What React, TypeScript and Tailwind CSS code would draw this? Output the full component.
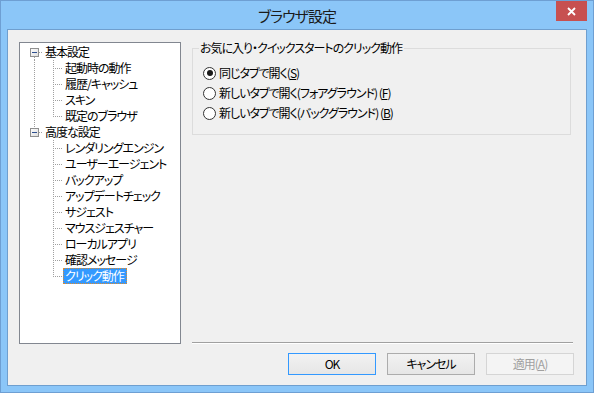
import React from "react";

type Row = {
  label: string;
  kind: "parent" | "child";
  firstParent?: boolean;
  lastParent?: boolean;
  lastChild?: boolean;
  underLast?: boolean;
  selected?: boolean;
};

const rows: Row[] = [
  { label: "基本設定", kind: "parent", firstParent: true },
  { label: "起動時の動作", kind: "child" },
  { label: "履歴/キャッシュ", kind: "child" },
  { label: "スキン", kind: "child" },
  { label: "既定のブラウザ", kind: "child", lastChild: true },
  { label: "高度な設定", kind: "parent", lastParent: true },
  { label: "レンダリングエンジン", kind: "child", underLast: true },
  { label: "ユーザーエージェント", kind: "child", underLast: true },
  { label: "バックアップ", kind: "child", underLast: true },
  { label: "アップデートチェック", kind: "child", underLast: true },
  { label: "サジェスト", kind: "child", underLast: true },
  { label: "マウスジェスチャー", kind: "child", underLast: true },
  { label: "ローカルアプリ", kind: "child", underLast: true },
  { label: "確認メッセージ", kind: "child", underLast: true },
  { label: "クリック動作", kind: "child", underLast: true, lastChild: true, selected: true },
];

const DOT = "#a0a0a0";

function TreeLines({ row }: { row: Row }) {
  if (row.kind === "parent") {
    return (
      <svg width="22" height="16" className="shrink-0" shapeRendering="crispEdges">
        {row.lastParent ? (
          <line x1="13.5" y1="0" x2="13.5" y2="4" stroke={DOT} strokeDasharray="1 1" />
        ) : (
          <line x1="13.5" y1="13" x2="13.5" y2="16" stroke={DOT} strokeDasharray="1 1" />
        )}
        <defs>
          <linearGradient id="bx" x1="0" y1="0" x2="1" y2="1">
            <stop offset="0" stopColor="#ffffff" />
            <stop offset="1" stopColor="#dcdcdc" />
          </linearGradient>
        </defs>
        <rect x="9.5" y="4.5" width="8" height="8" fill="url(#bx)" stroke="#8f8f8f" />
        <line x1="11" y1="8.5" x2="16" y2="8.5" stroke="#2e4f8f" />
        <line x1="18" y1="8.5" x2="22" y2="8.5" stroke={DOT} strokeDasharray="1 1" />
      </svg>
    );
  }
  return (
    <svg width="42" height="16" className="shrink-0" shapeRendering="crispEdges">
      {!row.underLast && (
        <line x1="13.5" y1="0" x2="13.5" y2="16" stroke={DOT} strokeDasharray="1 1" />
      )}
      <line
        x1="32.5"
        y1="0"
        x2="32.5"
        y2={row.lastChild ? 9 : 16}
        stroke={DOT}
        strokeDasharray="1 1"
      />
      <line x1="34" y1="8.5" x2="42" y2="8.5" stroke={DOT} strokeDasharray="1 1" />
    </svg>
  );
}

function Radio({ checked, children }: { checked?: boolean; children: React.ReactNode }) {
  return (
    <div className="flex items-center h-[20px]">
      <div className="w-[13px] h-[13px] rounded-full border border-[#333333] bg-white flex items-center justify-center shrink-0">
        {checked && <div className="w-[6px] h-[6px] rounded-full bg-[#1a1a1a]" />}
      </div>
      <span className="ml-[3px] text-[12px] leading-[16px] text-black">{children}</span>
    </div>
  );
}

export default function App() {
  return (
    <div className="w-[594px] h-[393px] bg-[#8bc6f8] border border-[#6e9fd3] flex flex-col font-['Noto_Sans_CJK_JP',sans-serif] [font-feature-settings:'palt'] tracking-[-1px] text-black select-none">
      <div className="relative h-[28px] flex items-center justify-center shrink-0">
        <span className="text-[15px] leading-[20px] text-[#1a1a1a] mt-[1px]">ブラウザ設定</span>
        <div className="absolute right-[6px] top-0 w-[31px] h-[20px] bg-[#c75050] flex items-center justify-center">
          <svg width="9" height="9" viewBox="0 0 9 9">
            <path d="M1 1 L8 8 M8 1 L1 8" stroke="#ffffff" strokeWidth="1.8" />
          </svg>
        </div>
      </div>

      <div className="ml-[6px] w-[580px] h-[357px] border border-[#6f9fcf] bg-[#f0f0f0] flex flex-col pl-[11px] pt-[12px]">
        <div className="flex">
          <div className="w-[162px] h-[302px] border border-[#828790] bg-white pt-[1px] shrink-0">
            {rows.map((r, i) => (
              <div key={i} className="flex items-center h-[16px] pl-[1px]">
                <TreeLines row={r} />
                <span
                  className={
                    "text-[12px] leading-[16px] h-[16px] pl-[2px] pr-[3px] whitespace-nowrap " +
                    (r.selected
                      ? "bg-[#3399ff] text-white outline outline-1 outline-dotted outline-[#e08a2a] -outline-offset-1"
                      : "text-black")
                  }
                >
                  {r.label}
                </span>
              </div>
            ))}
          </div>

          <div className="ml-[11px] w-[381px] h-[302px] flex flex-col">
            <div className="relative mt-[6px] w-[379px] h-[87px] border border-[#dcdcdc] pt-[14px] pl-[10px]">
              <span className="absolute left-[6px] top-[-9px] pl-[1px] pr-[2px] bg-[#f0f0f0] text-[12px] leading-[16px]">
                お気に入り・クイックスタートのクリック動作
              </span>
              <Radio checked>
                同じタブで開く(<span className="underline">S</span>)
              </Radio>
              <Radio>
                新しいタブで開く(フォアグラウンド) (<span className="underline">F</span>)
              </Radio>
              <Radio>
                新しいタブで開く(バックグラウンド) (<span className="underline">B</span>)
              </Radio>
            </div>
            <div className="flex-1" />
            <div className="h-[2px] border-t border-[#a0a0a0] border-b border-b-white" />
          </div>
        </div>

        <div className="mt-[9px] flex justify-end pr-[12px] gap-[11px]">
          <button className="w-[88px] h-[22px] border border-[#3399ff] bg-gradient-to-b from-[#f2f2f2] to-[#e6e6e6] text-[12px] leading-[16px] text-black">
            OK
          </button>
          <button className="w-[88px] h-[22px] border border-[#acacac] bg-gradient-to-b from-[#f2f2f2] to-[#e6e6e6] text-[12px] leading-[16px] text-black">
            キャンセル
          </button>
          <button className="w-[88px] h-[22px] border border-[#d5d5d5] bg-[#f4f4f4] text-[12px] leading-[16px] text-[#a0a0a0]">
            適用(<span className="underline">A</span>)
          </button>
        </div>
      </div>
    </div>
  );
}
